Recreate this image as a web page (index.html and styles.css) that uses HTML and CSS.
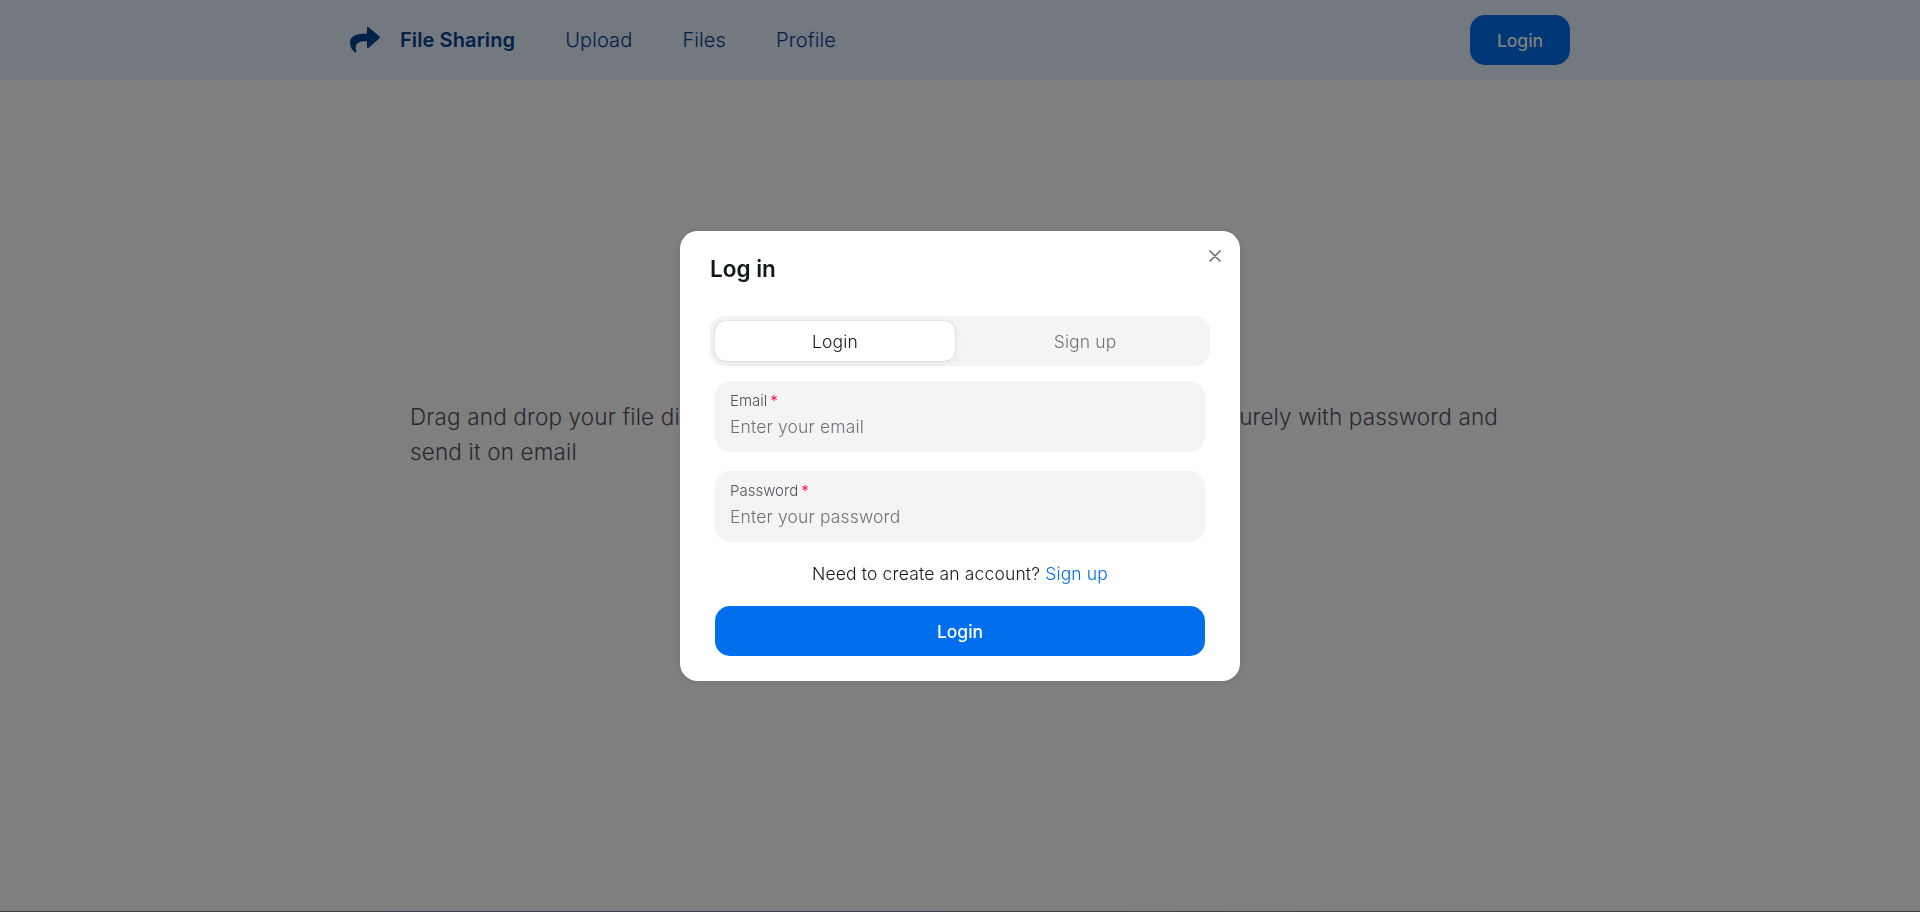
FILE: index.html
```html
<!DOCTYPE html>
<html lang="en">
<head>
<meta charset="utf-8">
<title>File Sharing</title>
<link rel="stylesheet" href="styles.css">
</head>
<body>
<div class="page">
  <nav class="navbar">
    <div class="navbar-inner">
      <div class="brand">
        <svg class="brand-icon" viewBox="0 0 30 26" aria-hidden="true"><path d="M17 .8c0-1 1-1.200 1.700-.5L29.300 9.300c.9.8.9 1.400 0 2.200L18.700 20.700c-.7.7-1.700.5-1.700-.5V14.300C9.500 14 4 16 6.200 24.500c.4 1.300-.4 1.700-1.200 1.100C2 23.200 0 19.500 0 15.700 0 8.500 7 6.500 17 6.400z"/></svg>
        <span class="brand-name">File Sharing</span>
      </div>
      <a class="nav-link">Upload</a>
      <a class="nav-link">Files</a>
      <a class="nav-link">Profile</a>
      <button class="button nav-login">Login</button>
    </div>
  </nav>
  <main class="hero">
    <p class="intro"><span class="intro-line"><span>Drag and drop your file directly</span> <span>share securely with password and</span></span> send it on email</p>
  </main>
  <footer class="footer-edge"></footer>
</div>
<div class="backdrop">
  <section class="modal">
    <header class="modal-header">
      <h2 class="modal-title">Log in</h2>
      <button class="close" aria-label="Close"><svg viewBox="0 0 24 24"><path d="M18 6L6 18M6 6l12 12"/></svg></button>
    </header>
    <div class="tabs">
      <button class="tab tab-active">Login</button>
      <button class="tab">Sign up</button>
    </div>
    <form class="form">
      <div class="field">
        <label class="label" for="email">Email<span class="star">*</span></label>
        <input class="input" id="email" type="email" placeholder="Enter your email">
      </div>
      <div class="field">
        <label class="label" for="password">Password<span class="star">*</span></label>
        <input class="input" id="password" type="password" placeholder="Enter your password">
      </div>
      <p class="hint">Need to create an account? <a class="link">Sign up</a></p>
      <button class="button submit" type="button">Login</button>
    </form>
  </section>
</div>
</body>
</html>
```
FILE: styles.css
```css
* { box-sizing: border-box; }
body { margin: 0; overflow: hidden; font-family: Inter, sans-serif; font-weight: 300; color: #11181c; }
button { border: 0; padding: 0; font: inherit; background: none; }
.page { height: 100vh; display: flex; flex-direction: column; background: #fff; }
.navbar { height: 80px; background: #e8f0ff; display: flex; justify-content: center; flex: none; }
.navbar-inner { width: 1220px; display: flex; align-items: center; gap: 50px; }
.brand { display: flex; align-items: center; gap: 20px; color: #004493; }
.brand-icon { width: 30px; height: 26px; fill: #004493; }
.brand-name { font-size: 20px; font-weight: 600; line-height: 30px; letter-spacing: .1px; }
.nav-link { font-size: 20px; line-height: 30px; letter-spacing: .12px; color: #004493; }
.button { height: 50px; border-radius: 15px; background: #006fee; color: #fff; font-size: 17.5px; font-weight: 500; }
.nav-login { width: 100px; margin-left: auto; }
.hero { flex: 1; display: flex; justify-content: center; padding-top: 319px; }
.intro { width: 1100px; margin: 0; padding: 0 12px 0 0; font-size: 22.5px; line-height: 35px; letter-spacing: .15px; color: #52525b; }
.intro-line { display: flex; justify-content: space-between; }
.footer-edge { height: 1px; flex: none; background: linear-gradient(to right, #8a8488, #7c86a4 22%, #7c86a4 45%, #868694 70%, #8a8488); }
.backdrop { position: fixed; inset: 0; display: flex; align-items: center; justify-content: center; background: rgba(0, 0, 0, .5); }
.modal { width: 560px; height: 450px; border-radius: 17.5px; background: #fff; padding: 20px 30px 25px; box-shadow: 0 0 1px rgba(0,0,0,.3), 0 2px 10px rgba(0,0,0,.06), 0 0 15px rgba(0,0,0,.03); }
.modal-header { height: 65px; display: flex; justify-content: space-between; }
.modal-title { margin: 0; font-size: 22.5px; line-height: 35px; font-weight: 600; }
.close { width: 20px; height: 20px; margin: -5px -15px 0 0; color: #71717a; }
.close svg { display: block; width: 20px; height: 20px; fill: none; stroke: currentColor; stroke-width: 2; stroke-linecap: round; }
.tabs { height: 50px; padding: 5px; display: flex; gap: 10px; border-radius: 15px; background: #f4f4f5; }
.tab { flex: 1; font-size: 17.5px; letter-spacing: .12px; color: #71717a; }
.tab-active { border-radius: 10px; background: #fff; color: #11181c; box-shadow: 0 0 1px rgba(0,0,0,.3), 0 2px 10px rgba(0,0,0,.06), 0 0 5px rgba(0,0,0,.02); }
.form { display: flex; flex-direction: column; padding: 15px 5px 0; }
.field { height: 71px; margin-bottom: 19px; padding: 9px 15px; border-radius: 15px; background: #f4f4f5; }
.label { display: block; font-size: 15px; line-height: 21px; color: #52525b; }
.star { margin-left: 3px; font-weight: 400; color: #f31260; }
.input { display: block; width: 100%; height: 30px; border: 0; padding: 0; outline: 0; background: transparent; font: inherit; font-size: 17.5px; letter-spacing: .14px; }
.input::placeholder { color: #71717a; opacity: 1; }
.hint { margin: 0 0 20px; font-size: 17.5px; line-height: 25px; letter-spacing: .15px; text-align: center; }
.link { color: #006fee; }
```
